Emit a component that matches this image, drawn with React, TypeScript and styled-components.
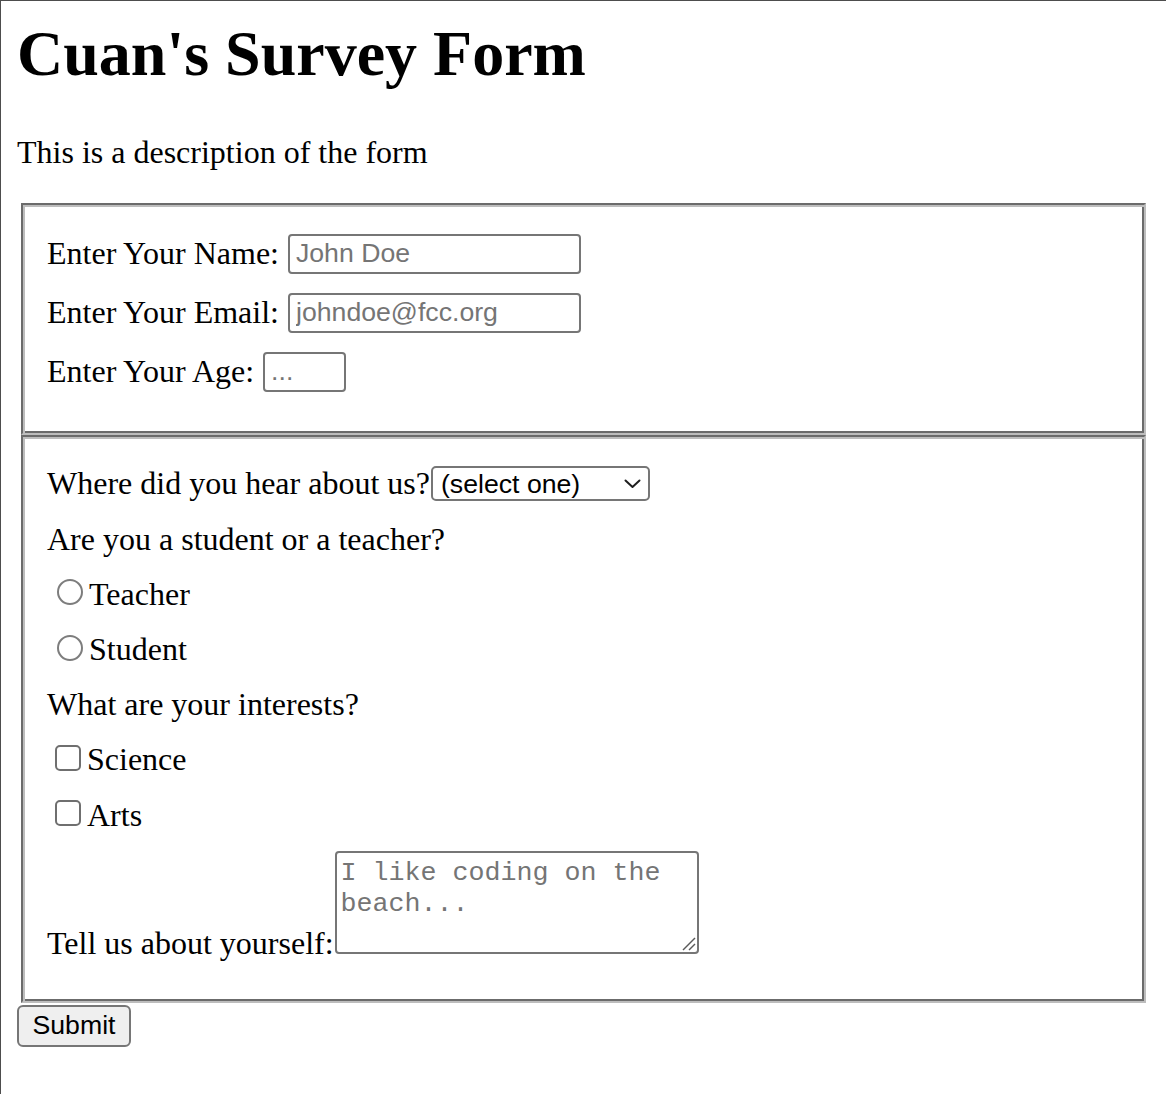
import styled, { createGlobalStyle } from 'styled-components';

const GlobalStyle = createGlobalStyle`
  html, body {
    margin: 0;
    padding: 0;
  }

  body {
    box-sizing: border-box;
    min-height: 100vh;
    padding: 16px;
    border-top: 1px solid #4d4d4d;
    border-left: 1px solid #4d4d4d;
    background: #fff;
    color: #000;
    font-family: "Liberation Serif", "Times New Roman", serif;
    font-size: 32px;
  }
`;

const Title = styled.h1`
  margin: 0 0 43px;
  font-size: 64px;
  font-weight: 700;
`;

const Description = styled.p`
  margin: 0 0 32px;
`;

const Form = styled.form`
  margin: 0;
`;

const Fieldset = styled.fieldset<{ $pb: number }>`
  margin: 0 4px;
  padding: 11.2px 24px ${p => p.$pb}px;
  border: 2px solid;
  border-color: #6b6b6b #bdbdbd #bdbdbd #6b6b6b;
  box-shadow: inset 2px 2px 0 #bdbdbd, inset -2px -2px 0 #6b6b6b;
  min-width: 0;
`;

const Row = styled.label<{ $h: number }>`
  display: flex;
  align-items: center;
  height: ${p => p.$h}px;
  margin: 16px 0;
  white-space: nowrap;
`;

const TextRow = styled.div`
  display: block;
  margin: 16px 0;
  white-space: nowrap;
`;

const TextInput = styled.input<{ $w: number }>`
  box-sizing: border-box;
  width: ${p => p.$w}px;
  height: 40px;
  margin: 0 0 0 9px;
  padding: 2px 6px;
  border: 2px solid #767676;
  border-radius: 4px;
  font-family: "Liberation Sans", Arial, sans-serif;
  font-size: 26.67px;
  color: #000;
  background: #fff;
  outline: none;

  &::placeholder {
    color: #757575;
  }
`;

const SelectWrap = styled.span`
  position: relative;
  display: inline-flex;
`;

const Select = styled.select`
  appearance: none;
  box-sizing: border-box;
  width: 219px;
  height: 35px;
  margin: 0 0 0 1px;
  padding: 0 34px 0 8px;
  border: 2px solid #767676;
  border-radius: 5px;
  background: #fff;
  font-family: "Liberation Sans", Arial, sans-serif;
  font-size: 26.67px;
  color: #000;
  outline: none;
`;

const Chevron = styled.svg`
  position: absolute;
  right: 9px;
  top: 13px;
  pointer-events: none;
`;

const Radio = styled.input`
  appearance: none;
  box-sizing: border-box;
  width: 26px;
  height: 26px;
  margin: 0 6px 4px 10px;
  border: 2px solid #7d7d7d;
  border-radius: 50%;
  background: #fff;
`;

const Checkbox = styled.input`
  appearance: none;
  box-sizing: border-box;
  width: 26px;
  height: 26px;
  margin: 0 6px 4px 8px;
  border: 2px solid #6f6f6f;
  border-radius: 5px;
  background: #fff;
`;

const AreaWrap = styled.span`
  position: relative;
  display: inline-block;
  vertical-align: baseline;
`;

const TextArea = styled.textarea`
  display: block;
  box-sizing: border-box;
  width: 364px;
  height: 103px;
  margin: 0 0 0 1px;
  padding: 5px 4px 4px;
  border: 2px solid #767676;
  border-radius: 4px;
  resize: none;
  font-family: "Liberation Mono", "Courier New", monospace;
  font-size: 26.67px;
  line-height: 31px;
  outline: none;

  &::placeholder {
    color: #757575;
  }
`;

const Grip = styled.svg`
  position: absolute;
  right: 3px;
  bottom: 3px;
  pointer-events: none;
`;

const SubmitButton = styled.button`
  display: block;
  box-sizing: border-box;
  width: 114px;
  height: 42px;
  margin: 2px 0 0;
  padding: 0;
  border: 2px solid #767676;
  border-radius: 6px;
  background: #efefef;
  font-family: "Liberation Sans", Arial, sans-serif;
  font-size: 26.67px;
  color: #000;
`;

export default function App() {
  return (
    <>
      <GlobalStyle />
      <Title>Cuan's Survey Form</Title>
      <Description>This is a description of the form</Description>
      <Form onSubmit={e => e.preventDefault()}>
        <Fieldset $pb={24}>
          <Row $h={43}>
            Enter Your Name:
            <TextInput $w={293} type="text" placeholder="John Doe" />
          </Row>
          <Row $h={43}>
            Enter Your Email:
            <TextInput $w={293} type="email" placeholder="johndoe@fcc.org" />
          </Row>
          <Row $h={43}>
            Enter Your Age:
            <TextInput $w={83} type="text" placeholder="..." />
          </Row>
        </Fieldset>
        <Fieldset $pb={23}>
          <Row $h={39.2}>
            Where did you hear about us?
            <SelectWrap>
              <Select defaultValue="">
                <option value="">(select one)</option>
                <option value="friend">Friend</option>
                <option value="web">Website</option>
              </Select>
              <Chevron width="17" height="10" viewBox="0 0 17 10">
                <polyline points="1.5,1.5 8.5,8 15.5,1.5" fill="none" stroke="#1f1f1f" strokeWidth="2" strokeLinecap="round" strokeLinejoin="round" />
              </Chevron>
            </SelectWrap>
          </Row>
          <Row as="div" $h={39.2}>Are you a student or a teacher?</Row>
          <Row $h={39.2}>
            <Radio type="radio" name="role" value="teacher" />
            Teacher
          </Row>
          <Row $h={39.2}>
            <Radio type="radio" name="role" value="student" />
            Student
          </Row>
          <Row as="div" $h={39.2}>What are your interests?</Row>
          <Row $h={39.2}>
            <Checkbox type="checkbox" value="science" />
            Science
          </Row>
          <Row $h={39.2}>
            <Checkbox type="checkbox" value="arts" />
            Arts
          </Row>
          <TextRow>
            Tell us about yourself:
            <AreaWrap>
              <TextArea placeholder="I like coding on the beach..." />
              <Grip width="15" height="15" viewBox="0 0 15 15">
                <line x1="2" y1="14" x2="14" y2="2" stroke="#5a5a5a" strokeWidth="1.5" />
                <line x1="8" y1="14" x2="14" y2="8" stroke="#5a5a5a" strokeWidth="1.5" />
              </Grip>
            </AreaWrap>
          </TextRow>
        </Fieldset>
        <SubmitButton type="submit">Submit</SubmitButton>
      </Form>
    </>
  );
}
